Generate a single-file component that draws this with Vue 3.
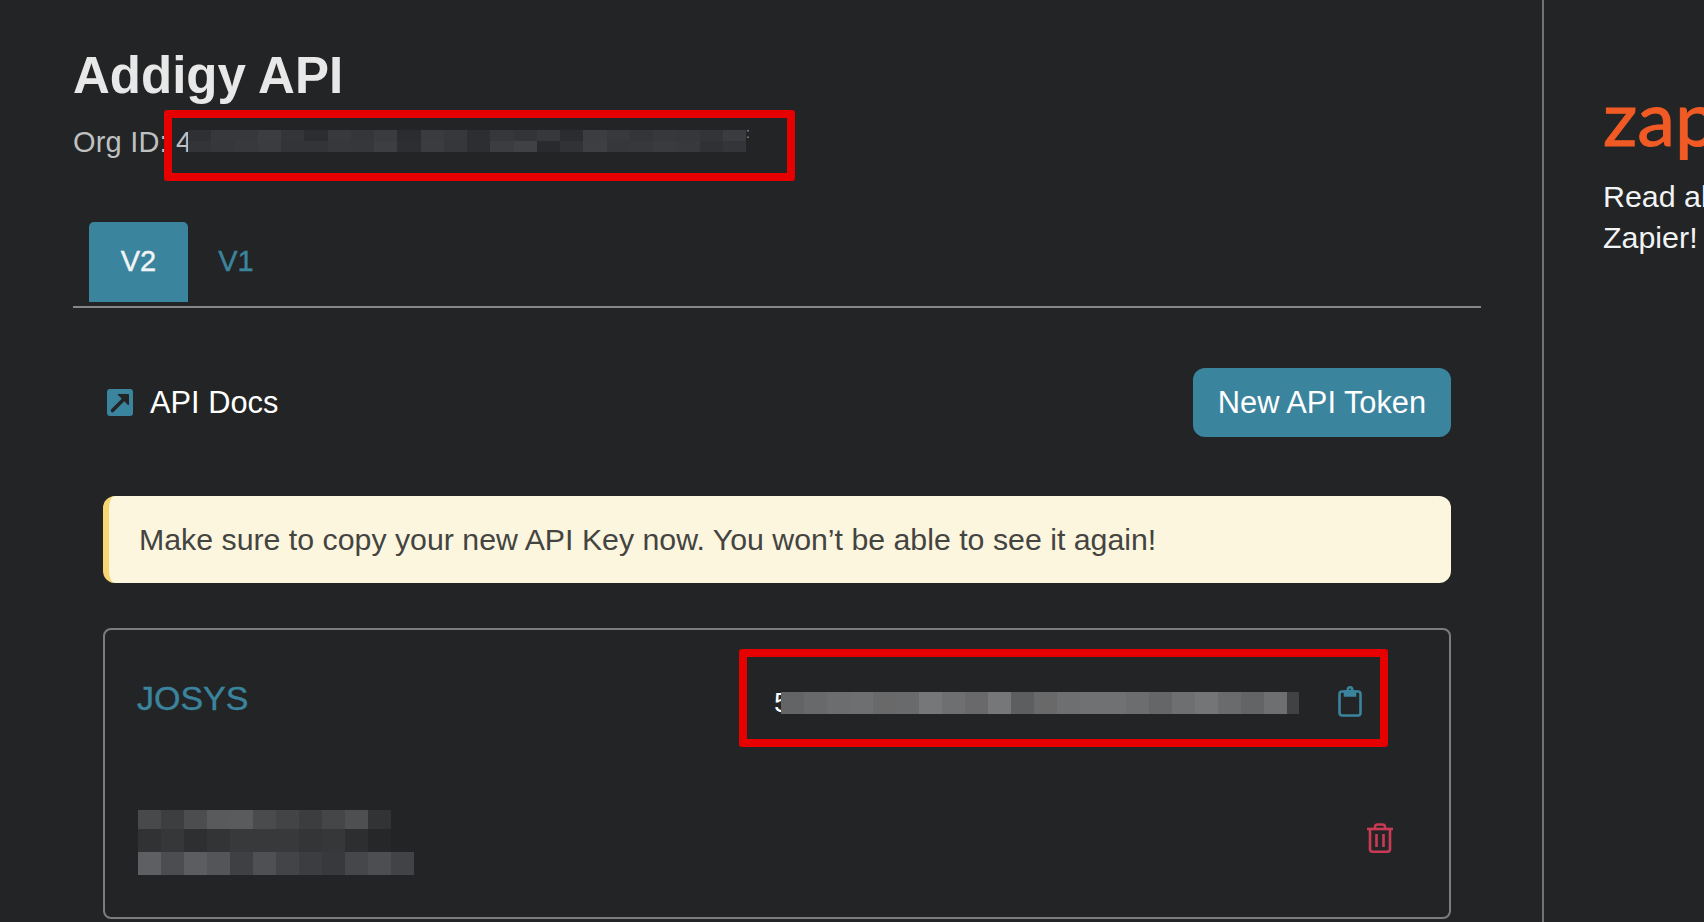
<template>
  <div class="page">
    <main class="main">
      <h1 class="title">Addigy API</h1>
      <div class="org-row">
        <span class="org-label">Org ID: 4</span>
        <div class="mosaic org-mosaic">
          <div v-for="(row, r) in orgBlur" :key="r" class="mosaic-row org-row-cells">
            <span v-for="(c, i) in row" :key="i" class="cell" :style="{ background: c }"></span>
          </div>
        </div>
        <span class="org-tail">:</span>
        <div class="redact redact-org"></div>
      </div>

      <div class="tabs">
        <div class="tab active">V2</div>
        <div class="tab">V1</div>
      </div>

      <section class="content">
        <div class="toolbar">
          <a class="docs-link">
            <svg class="docs-icon" viewBox="0 0 26 27" width="26" height="27">
              <rect width="26" height="27" rx="3" fill="#3b849e" />
              <path d="M5.5 21.5 L17 10" stroke="#232426" stroke-width="3.6" stroke-linecap="round" fill="none" />
              <path d="M11 5.5 H21.5 V16 Z" fill="#232426" stroke="#232426" stroke-width="1" stroke-linejoin="round" />
            </svg>
            API Docs
          </a>
          <button class="new-token">New API Token</button>
        </div>

        <div class="notice">Make sure to copy your new API Key now. You won’t be able to see it again!</div>

        <div class="token-card">
          <div class="token-top">
            <span class="token-name">JOSYS</span>
            <div class="token-key">
              <span class="key-start">5</span>
              <div class="mosaic-row key-cells">
                <span v-for="(c, i) in keyBlur" :key="i" class="cell" :style="{ background: c }"></span>
              </div>
              <svg class="clip-icon" viewBox="0 0 24 31" width="24" height="31" fill="none" stroke="#3b849e" stroke-width="2.6">
                <rect x="1.5" y="5.5" width="21" height="24" rx="2.5" />
                <path d="M7 5.5 H17 V9.5 H7 Z" fill="#3b849e" />
                <circle cx="12" cy="3.5" r="2.2" />
              </svg>
              <div class="redact redact-key"></div>
            </div>
          </div>
          <div class="token-bottom">
            <div class="mosaic name-mosaic">
              <div v-for="(row, r) in nameBlur" :key="r" class="mosaic-row" :class="'name-row-' + r">
                <span v-for="(c, i) in row" :key="i" class="cell" :style="{ background: c }"></span>
              </div>
            </div>
            <svg class="trash-icon" viewBox="0 0 26 30" width="26" height="30" fill="none" stroke="#c93a55" stroke-width="2.6">
              <path d="M0 6 H26" />
              <path d="M8 6 V4 Q8 1.5 10.5 1.5 H15.5 Q18 1.5 18 4 V6" />
              <path d="M3 6 V26 Q3 28.7 5.7 28.7 H20.3 Q23 28.7 23 26 V6" />
              <path d="M9.5 11 V24 M16.5 11 V24" />
            </svg>
          </div>
        </div>
      </section>
    </main>

    <aside class="side">
      <div class="zapier-logo">zapier</div>
      <p class="side-text">Read all about Addigy on<br>Zapier!</p>
    </aside>
  </div>
</template>

<script setup>
// blurred-out values from the screenshot
const orgBlur = [
  ['#2f3033', '#37383b', '#37383b', '#3c3d40', '#343538', '#2c2d30', '#38393c', '#35363a', '#3a3b3e', '#2b2c2f', '#3a3b3e', '#37383b', '#2d2e31', '#36373a', '#333437', '#37383b', '#2b2c2f', '#3c3d40', '#38393c', '#343538', '#37383b', '#36373a', '#333437', '#3b3c3f'],
  ['#333437', '#36373a', '#38393c', '#3b3c3f', '#333437', '#333437', '#37383b', '#36373a', '#3d3e41', '#2d2e31', '#3b3c3f', '#36373a', '#2d2e31', '#3c3d40', '#404144', '#292a2d', '#313235', '#3e3f42', '#36373a', '#37383b', '#3a3b3e', '#38393c', '#303134', '#343538']
]
const keyBlur = ['#636465', '#68696a', '#6c6d6e', '#6e6f70', '#69696a', '#696a6b', '#767778', '#6e6f70', '#69696b', '#767778', '#5d5e5f', '#69696a', '#6e6f70', '#707172', '#707172', '#6c6d6e', '#656667', '#6e6f70', '#747576', '#6a6b6c', '#636465', '#6e6f70', '#414244']
const nameBlur = [
  ['#48494b', '#3d3e40', '#4c4d4f', '#595a5c', '#5a5b5d', '#4a4b4d', '#434446', '#3c3d3f', '#454648', '#4e4f51', '#323335'],
  ['#313234', '#363739', '#2e2f31', '#333436', '#38393b', '#38393b', '#38393b', '#343537', '#363739', '#2d2e30', '#262729'],
  ['#5e5f62', '#4c4d50', '#5c5d60', '#545558', '#3f4043', '#4f5053', '#434447', '#3c3d40', '#38393c', '#46474a', '#4d4e51', '#424346']
]
</script>

<style>
html, body {
  margin: 0;
  background: #232426;
  overflow: hidden;
}
</style>

<style scoped>
.page {
  width: 1704px;
  height: 922px;
  display: flex;
  overflow: hidden;
  background: #232426;
  font-family: "Liberation Sans", Arial, sans-serif;
}

.main {
  flex: none;
  width: 1408px;
  height: 878px;
  padding: 44px 61px 0 73px;
  border-right: 2px solid #6f7378;
}

.title {
  margin: 0;
  font-size: 51px;
  line-height: 64px;
  font-weight: 700;
  color: #e8e8e8;
}

.org-row {
  position: relative;
  display: flex;
  align-items: flex-start;
  margin-top: 15px;
  height: 40px;
}

.org-label {
  width: 115px;
  flex: none;
  margin-top: 2px;
  font-size: 29px;
  line-height: 34px;
  letter-spacing: 0.2px;
  color: #bfc0c2;
  white-space: nowrap;
  overflow: hidden;
}

.mosaic-row {
  display: flex;
}

.cell {
  display: block;
  width: 23px;
  flex: none;
  height: 100%;
}

.org-mosaic {
  margin-top: 7px;
}

.org-row-cells {
  height: 11px;
}

.org-row-cells .cell {
  width: 23.25px;
}

.org-tail {
  font-size: 14px;
  line-height: 14px;
  margin-top: 3px;
  color: #9a9b9d;
}

.redact {
  position: absolute;
  box-sizing: border-box;
  border: 8px solid #e60000;
  border-radius: 3px;
  pointer-events: none;
}

.redact-org {
  left: 91px;
  top: -13px;
  width: 631px;
  height: 71px;
}

.tabs {
  display: flex;
  margin-top: 59px;
  padding-left: 16px;
  padding-bottom: 4px;
  border-bottom: 2px solid #85878b;
}

.tab {
  width: 99px;
  height: 78px;
  padding-bottom: 2px;
  border-radius: 5px 5px 0 0;
  display: flex;
  align-items: center;
  justify-content: center;
  font-size: 29px;
  -webkit-text-stroke: 0.4px;
  color: #3b849e;
}

.tab.active {
  background: #3b849e;
  color: #f2f4f5;
}

.tab + .tab {
  width: 96px;
}

.content {
  padding: 60px 30px 0;
}

.toolbar {
  display: flex;
  justify-content: space-between;
  align-items: center;
}

.docs-link {
  display: flex;
  align-items: center;
  gap: 17px;
  padding-left: 4px;
  font-size: 30.8px;
  color: #fff;
}

.docs-icon {
  flex: none;
}

.new-token {
  width: 258px;
  height: 69px;
  border: none;
  border-radius: 12px;
  background: #3b849e;
  color: #fff;
  font-family: inherit;
  font-size: 30.8px;
}

.notice {
  margin-top: 59px;
  height: 87px;
  box-sizing: border-box;
  display: flex;
  align-items: center;
  padding-left: 30px;
  background: #fcf6df;
  border-left: 6px solid #f7d774;
  border-radius: 12px;
  font-size: 30.3px;
  color: #444441;
}

.token-card {
  margin-top: 45px;
  height: 291px;
  box-sizing: border-box;
  border: 2px solid #7a7d80;
  border-radius: 8px;
  padding: 0 54px 0 32px;
}

.token-top {
  display: flex;
  justify-content: space-between;
  height: 180px;
}

.token-name {
  margin-top: 48px;
  font-size: 34px;
  line-height: 40px;
  -webkit-text-stroke: 0.4px;
  color: #3b849e;
}

.token-key {
  position: relative;
  display: flex;
  align-items: flex-start;
  margin-right: 33px;
  margin-top: 62px;
  font-size: 28px;
  color: #fff;
}

.key-start {
  width: 7px;
  height: 22px;
  overflow: hidden;
  line-height: 22px;
  flex: none;
}

.key-cells {
  height: 22px;
  width: 518px;
}

.key-cells .cell:last-child {
  width: 12px;
}

.clip-icon {
  margin-left: 39px;
  margin-top: -6px;
  flex: none;
}

.redact-key {
  left: -35px;
  top: -43px;
  width: 649px;
  height: 98px;
}

.token-bottom {
  display: flex;
  justify-content: space-between;
  align-items: flex-start;
}

.name-mosaic {
  margin-left: 1px;
}

.name-row-0 {
  height: 19px;
}

.name-row-1,
.name-row-2 {
  height: 23px;
}

.trash-icon {
  margin-top: 13px;
  margin-right: 2px;
  flex: none;
}

.side {
  flex: none;
  width: 400px;
  padding: 77px 0 0 59px;
}

.zapier-logo {
  font-family: Lato, sans-serif;
  font-size: 76px;
  line-height: 80px;
  -webkit-text-stroke: 1px #f15a24;
  color: #f15a24;
}

.side-text {
  margin: 19px 0 0;
  width: 400px;
  font-size: 30.4px;
  line-height: 41px;
  color: #f2f3f4;
  white-space: nowrap;
}
</style>
